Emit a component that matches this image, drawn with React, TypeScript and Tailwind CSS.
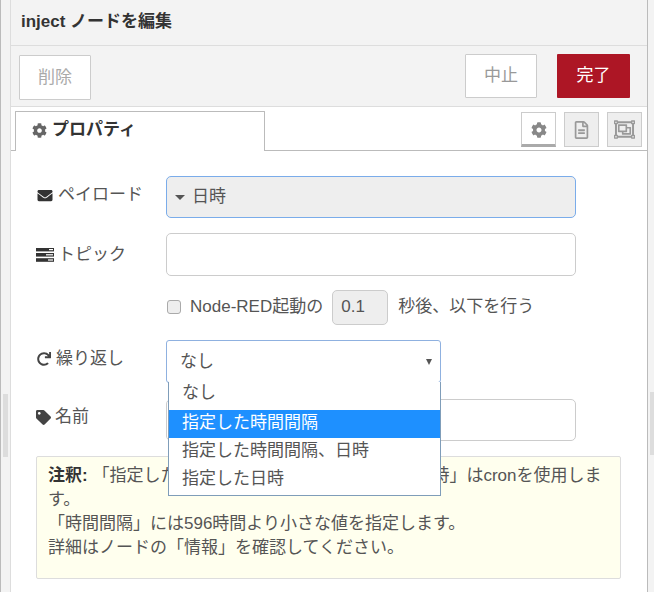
import { FaCog, FaEnvelope, FaRedo, FaTag, FaRegFileAlt, FaRegObjectGroup } from 'react-icons/fa';

const FONT = "font-['Liberation_Sans','Noto_Sans_CJK_JP',sans-serif]";

function TopicIcon() {
  return (
    <svg viewBox="0 0 18 14" className="h-[14px] w-[18px] shrink-0 text-[#333]" fill="currentColor">
      <rect x="0" y="0" width="18" height="3.4" />
      <rect x="0" y="5" width="18" height="3.6" />
      <rect x="0" y="10.2" width="18" height="3.6" />
      <rect x="13" y="1" width="4" height="1.2" fill="#fff" />
      <rect x="10" y="6.2" width="7" height="1.2" fill="#fff" />
      <rect x="12" y="11.4" width="5" height="1.2" fill="#fff" />
    </svg>
  );
}

function Label({ icon, text }: { icon: React.ReactNode; text: string }) {
  return (
    <div className="flex w-[130px] shrink-0 items-center gap-[4px] text-[#555]">
      {icon}
      <span>{text}</span>
    </div>
  );
}

export default function App() {
  return (
    <div className={`${FONT} flex h-[592px] w-[654px] overflow-hidden bg-[#f3f3f3] text-[17px] leading-[24px] text-[#555]`}>
      {/* Left gutter with resize handle */}
      <div className="h-full w-[11px] shrink-0 border-r border-[#ddd] border-l-[1px] border-l-[#bbb]">
        <div className="ml-[2px] mt-[394px] h-[63px] w-[5px] bg-[#ddd]" />
      </div>

      <div className="flex h-full w-[636px] shrink-0 flex-col bg-white">
        <div className="flex h-[46px] shrink-0 items-center border-b border-[#ddd] bg-[#f3f3f3] pb-[2px] pl-[10px] text-[17px] font-bold text-[#333]">
          inject ノードを編集
        </div>

        <div className="flex h-[61px] shrink-0 items-start border-b border-[#ddd] bg-[#f3f3f3] pl-[8px] pr-[17px] pt-[8px]">
          <button className="mt-[1px] h-[45px] w-[72px] rounded-[1px] border border-[#ccc] bg-white text-[#aaa]">削除</button>
          <button className="ml-auto h-[44px] w-[72px] rounded-[1px] border border-[#ccc] bg-white text-[#999]">中止</button>
          <button className="ml-[20px] h-[44px] w-[73px] rounded-[1px] bg-[#ad1625] text-white">完了</button>
        </div>

        <div className="flex h-[44px] shrink-0 items-start border-b border-[#bbb] pl-[4px] pt-[4px]">
          <div className="flex h-[40px] w-[250px] items-center gap-[5px] rounded-t-[1px] border border-b-0 border-[#bbb] bg-white pb-[3px] pl-[16px] font-bold text-[#333]">
            <FaCog className="h-[15px] w-[15px] text-[#666]" />
            <span>プロパティ</span>
          </div>
          <div className="ml-auto flex gap-[8px] pr-[5px] pt-[1px]">
            <div className="flex h-[35px] w-[35px] items-center justify-center border border-[#ccc] border-b-[3px] border-b-[#aaa] bg-white pt-[2px]">
              <FaCog className="h-[16px] w-[16px] text-[#888]" />
            </div>
            <div className="flex h-[35px] w-[35px] items-center justify-center border border-[#ccc] bg-[#eee]">
              <FaRegFileAlt className="h-[18px] w-[15px] text-[#999]" />
            </div>
            <div className="flex h-[35px] w-[35px] items-center justify-center border border-[#ccc] bg-[#eee]">
              <FaRegObjectGroup className="h-[21px] w-[21px] text-[#999]" />
            </div>
          </div>
        </div>

        <div className="relative flex-1 bg-white pl-[25px] pr-[25px]">
          <div className="mt-[25px] flex items-start">
            <div className="flex h-[42px] items-center pb-[4px]">
              <Label icon={<FaEnvelope className="h-[15px] w-[18px] shrink-0 text-[#333]" />} text="ペイロード" />
            </div>
            <div className="flex h-[42px] w-[410px] items-center gap-[7px] rounded-[5px] border border-[#7aacea] bg-[#eee] pl-[8px] text-[#555]">
              <span className="h-0 w-0 border-x-[5px] border-t-[5px] border-x-transparent border-t-[#555]" />
              <span>日時</span>
            </div>
          </div>

          <div className="mt-[15px] flex items-start">
            <div className="flex h-[43px] items-center">
              <Label icon={<TopicIcon />} text="トピック" />
            </div>
            <div className="h-[43px] w-[410px] rounded-[5px] border border-[#ccc] bg-white" />
          </div>

          <div className="ml-[131px] mt-[13px] flex h-[36px] items-center">
            <span className="h-[14px] w-[14px] rounded-[3px] border border-[#aaa] bg-[#eee]" />
            <span className="ml-[9px]">Node-RED起動の</span>
            <div className="ml-[9px] flex h-[35px] w-[56px] items-center rounded-[5px] border border-[#ccc] bg-[#eee] pl-[8px]">0.1</div>
            <span className="ml-[10px]">秒後、以下を行う</span>
          </div>

          <div className="mt-[15px] flex items-start">
            <div className="flex h-[43px] items-center pb-[6px]">
              <Label icon={<FaRedo className="h-[14px] w-[16px] shrink-0 text-[#444]" />} text="繰り返し" />
            </div>
            <div className="relative flex h-[43px] w-[275px] items-center rounded-[3px] border border-[#8fb1e0] bg-white pl-[13px]">
              なし
              <span className="absolute right-[8px] top-[18px] h-0 w-0 border-x-[3.5px] border-t-[6px] border-x-transparent border-t-[#555]" />
              <div className="absolute left-[1px] top-[41px] z-10 w-[273px] border border-t-0 border-[#7f9db9] bg-white text-[#555]">
                <div className="h-[28px] pl-[13px] leading-[22px]">なし</div>
                <div className="h-[28px] bg-[#1e90ff] pl-[13px] leading-[26px] text-white">指定した時間間隔</div>
                <div className="h-[28px] pl-[13px] leading-[26px]">指定した時間間隔、日時</div>
                <div className="h-[29px] pl-[13px] leading-[26px]">指定した日時</div>
              </div>
            </div>
          </div>

          <div className="mt-[16px] flex items-start">
            <div className="flex h-[42px] items-center pb-[6px]">
              <Label icon={<FaTag className="h-[15px] w-[15px] shrink-0 text-[#444]" />} text="名前" />
            </div>
            <div className="h-[42px] w-[410px] rounded-[5px] border border-[#ccc] bg-white" />
          </div>

          <div className="mt-[15px] h-[123px] w-[585px] rounded-[2px] border border-[#ddd] bg-[#ffffee] px-[11px] pt-[7px] text-[#555]">
            <b className="text-[#333]">注釈:</b> 「指定した時間間隔、日時」や「指定した日時」はcronを使用します。
            <br />
            「時間間隔」には596時間より小さな値を指定します。
            <br />
            詳細はノードの「情報」を確認してください。
          </div>
        </div>
      </div>

      {/* Right gutter with resize handle */}
      <div className="h-full min-w-0 flex-1 border-l border-[#bbb] bg-[#f3f3f3]">
        <div className="ml-[2px] mt-[392px] h-[63px] w-[4px] bg-[#ddd]" />
      </div>
    </div>
  );
}
